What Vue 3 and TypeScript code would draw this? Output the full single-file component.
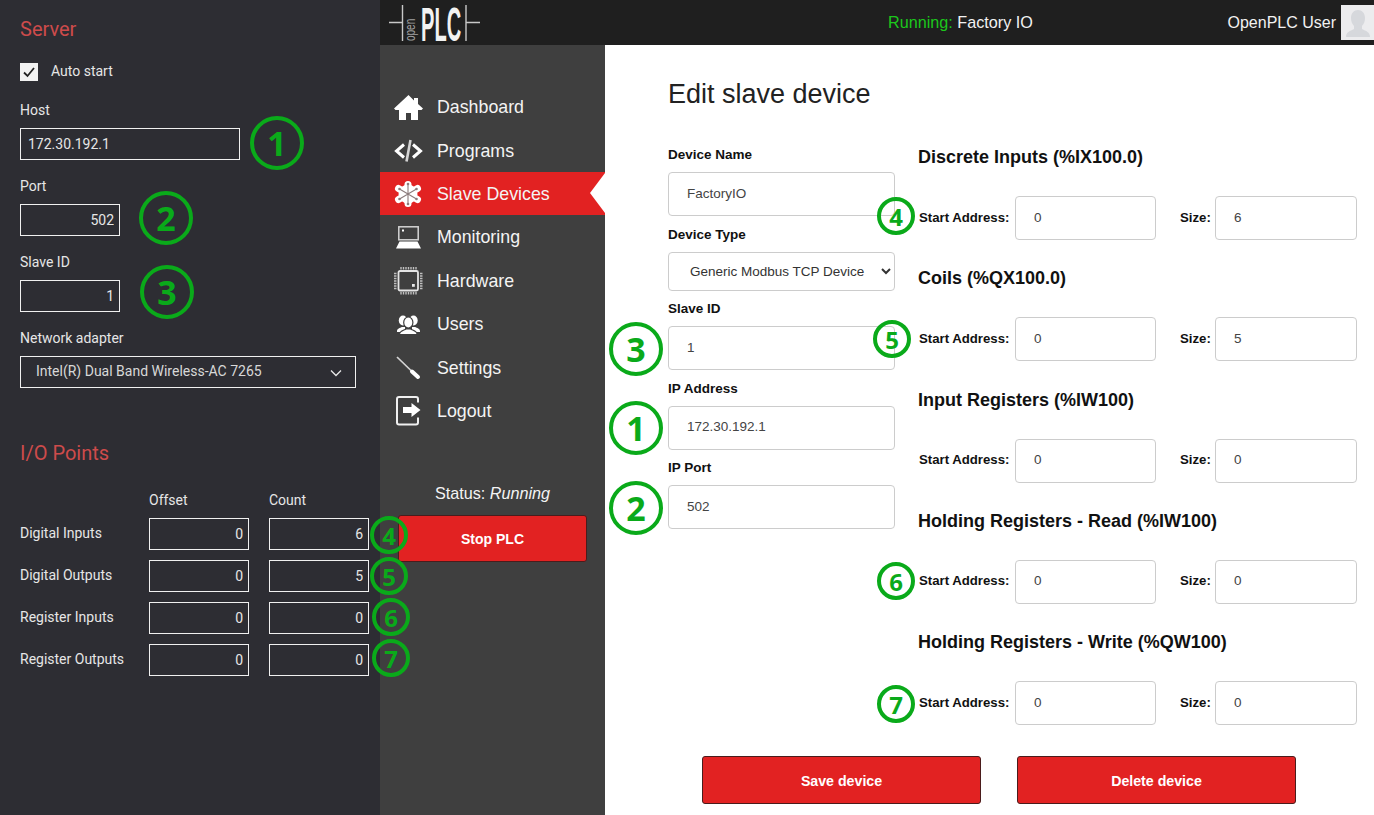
<script setup lang="ts">
// numbered green markers drawn over the screenshot
const badges = [
  { n: 1, x: 277, y: 143, big: true },
  { n: 2, x: 166, y: 218, big: true },
  { n: 3, x: 167, y: 292, big: true },
  { n: 4, x: 389, y: 535, big: false },
  { n: 5, x: 389, y: 576, big: false },
  { n: 6, x: 391, y: 617, big: false },
  { n: 7, x: 391, y: 658, big: false },
  { n: 3, x: 636, y: 349, big: true },
  { n: 1, x: 636, y: 428, big: true },
  { n: 2, x: 636, y: 508, big: true },
  { n: 4, x: 896, y: 216, big: false },
  { n: 5, x: 892, y: 339, big: false },
  { n: 6, x: 896, y: 581, big: false },
  { n: 7, x: 896, y: 704, big: false },
]

const ioRows = [
  { label: 'Digital Inputs', offset: 0, count: 6 },
  { label: 'Digital Outputs', offset: 0, count: 5 },
  { label: 'Register Inputs', offset: 0, count: 0 },
  { label: 'Register Outputs', offset: 0, count: 0 },
]

const navItems = [
  { id: 'home', label: 'Dashboard' },
  { id: 'code', label: 'Programs' },
  { id: 'slave', label: 'Slave Devices', active: true },
  { id: 'monitor', label: 'Monitoring' },
  { id: 'chip', label: 'Hardware' },
  { id: 'users', label: 'Users' },
  { id: 'tool', label: 'Settings' },
  { id: 'logout', label: 'Logout' },
]

const sections = [
  { title: 'Discrete Inputs (%IX100.0)', start: 0, size: 6 },
  { title: 'Coils (%QX100.0)', start: 0, size: 5 },
  { title: 'Input Registers (%IW100)', start: 0, size: 0 },
  { title: 'Holding Registers - Read (%IW100)', start: 0, size: 0 },
  { title: 'Holding Registers - Write (%QW100)', start: 0, size: 0 },
]
</script>

<template>
  <div class="page">
    <aside class="server">
      <h2 class="panel-title">Server</h2>
      <div class="auto-start">
        <span class="check">
          <svg width="18" height="18" viewBox="0 0 18 18"><path d="M4 9.500 7.500 13 14 5" fill="none" stroke="#222" stroke-width="1.800" /></svg>
        </span>
        <span class="auto-text">Auto start</span>
      </div>
      <label class="dark-label">Host</label>
      <input class="dark-input host" value="172.30.192.1" />
      <label class="dark-label">Port</label>
      <input class="dark-input short" value="502" />
      <label class="dark-label">Slave ID</label>
      <input class="dark-input short" value="1" />
      <label class="dark-label">Network adapter</label>
      <div class="adapter">
        <select>
          <option>Intel(R) Dual Band Wireless-AC 7265</option>
        </select>
        <svg class="chevron" width="12" height="8" viewBox="0 0 12 8"><path d="M1 1.500 6 6.500 11 1.500" fill="none" stroke="#e8e8e8" stroke-width="1.300" /></svg>
      </div>

      <h2 class="panel-title io-title">I/O Points</h2>
      <div class="io-grid">
        <span></span>
        <span class="io-head">Offset</span>
        <span class="io-head">Count</span>
        <template v-for="row in ioRows" :key="row.label">
          <span class="io-label">{{ row.label }}</span>
          <input class="dark-input" :value="row.offset" />
          <input class="dark-input" :value="row.count" />
        </template>
      </div>
    </aside>

    <div class="app">
      <header class="topbar">
        <svg class="logo" width="92" height="45" viewBox="0 0 92 45">
          <path d="M0 22.500H13.500M13.500 5V41M77 5V41M77 22.500H91" stroke="#c8c8c8" stroke-width="1.400" fill="none" />
          <text class="logo-open" transform="translate(26 41) rotate(-90) scale(1 1.500)">open</text>
          <text class="logo-plc" transform="translate(32 41) scale(.59 1.400)">PLC</text>
        </svg>
        <div class="running"><span class="green">Running:</span> Factory IO</div>
        <div class="user">OpenPLC User</div>
        <div class="avatar">
          <svg width="33" height="35" viewBox="0 0 33 35">
            <path d="M5 32c0-5 4-6 8-8v-3c-2-2-3-5-3-8 0-5 3-8 7-8s7 3 7 8c0 3-1 6-3 8v3c4 2 8 3 8 8z" fill="#d6d8dc" />
          </svg>
        </div>
      </header>

      <div class="body">
        <nav class="side">
          <ul class="menu">
            <li v-for="item in navItems" :key="item.label" class="menu-item" :class="{ active: item.active }">
              <svg class="icon" width="30" height="30" viewBox="0 0 30 30">
                <template v-if="item.id === 'home'">
                  <path d="M15.500 2 1 15.500 2.500 17H6V27H13V20H18V27H25V17H28.500L30 15.500 25 11V5H21V7.500Z" fill="#fff" />
                </template>
                <template v-else-if="item.id === 'code'">
                  <path d="M11 8.500 3.500 15 11 21.500M20 8.500 27.500 15 20 21.500" fill="none" stroke="#fff" stroke-width="3" />
                  <path d="M17.500 4 13.500 25.500" stroke="#d4d4d4" stroke-width="2.600" />
                </template>
                <template v-else-if="item.id === 'slave'">
                  <path d="M15 5.500V24.500M5.500 9.500 24.500 20.500M24.500 9.500 5.500 20.500" stroke="#fff" stroke-width="7" stroke-linecap="round" />
                  <circle cx="15" cy="15" r="9.500" fill="#fff" />
                  <path d="M15 5V25M6.500 10 23.500 20M23.500 10 6.500 20" stroke="#8c7c7c" stroke-width="1.100" />
                  <g fill="#8c7c7c">
                    <circle cx="15" cy="5" r="1.300" />
                    <circle cx="15" cy="25" r="1.300" />
                    <circle cx="6.500" cy="10" r="1.300" />
                    <circle cx="23.500" cy="10" r="1.300" />
                    <circle cx="6.500" cy="20" r="1.300" />
                    <circle cx="23.500" cy="20" r="1.300" />
                  </g>
                </template>
                <template v-else-if="item.id === 'monitor'">
                  <rect x="5.800" y="3.800" width="19.400" height="13" fill="none" stroke="#d4d4d4" stroke-width="1.500" />
                  <rect x="9" y="6.500" width="2" height="2" fill="#fff" />
                  <path d="M6.500 18.500H24.500L28 25.500H3Z" fill="#fff" />
                </template>
                <template v-else-if="item.id === 'chip'">
                  <rect x="5.500" y="5" width="19.500" height="19.500" rx="1.500" fill="none" stroke="#e4e4e4" stroke-width="1.800" />
                  <rect x="19" y="18" width="2.800" height="2.800" fill="#e8e8e8" />
                  <path d="M8 1V3.500M10.500 1V3.500M13 1V3.500M15.500 1V3.500M18 1V3.500M20.500 1V3.500M23 1V3.500M8 26V28.500M10.500 26V28.500M13 26V28.500M15.500 26V28.500M18 26V28.500M20.500 26V28.500M23 26V28.500M1 7.500H3.500M1 10H3.500M1 12.500H3.500M1 15H3.500M1 17.500H3.500M1 20H3.500M1 22.500H3.500M27 7.500H29.500M27 10H29.500M27 12.500H29.500M27 15H29.500M27 17.500H29.500M27 20H29.500M27 22.500H29.500" stroke="#c0c0c0" stroke-width="1.400" />
                </template>
                <template v-else-if="item.id === 'users'">
                  <ellipse cx="10" cy="10.500" rx="4.200" ry="5" fill="#fff" />
                  <ellipse cx="20.500" cy="10.500" rx="4.200" ry="5" fill="#fff" />
                  <path d="M4 21c0-2.500 3-3 5-4h3v5H4ZM27 21c0-2.500-3-3-5-4h-3v5h8Z" fill="#fff" />
                  <ellipse cx="15.300" cy="12.500" rx="4.600" ry="5.500" fill="#fff" stroke="#3f3f3f" stroke-width="1.200" />
                  <path d="M6.500 24.500c0-3.500 4-4 6.500-5.500h4.600c2.500 1.500 6.500 2 6.500 5.500Z" fill="#fff" stroke="#3f3f3f" stroke-width="1.200" />
                </template>
                <template v-else-if="item.id === 'tool'">
                  <path d="M4 4 18.500 18" stroke="#d4d4d4" stroke-width="1.700" />
                  <path d="M19 18.500 25 24" stroke="#fff" stroke-width="4" stroke-linecap="round" />
                </template>
                <template v-else-if="item.id === 'logout'">
                  <path d="M25 6.500V3a2 2 0 0 0-2-2H6a2 2 0 0 0-2 2V26.500a2 2 0 0 0 2 2H23a2 2 0 0 0 2-2V21.500" fill="none" stroke="#f0f0f0" stroke-width="2" />
                  <path d="M10 11H18.500V7L27.500 14 18.500 21V17H10Z" fill="#fff" />
                </template>
              </svg>
              <span>{{ item.label }}</span>
            </li>
          </ul>
          <div class="status">Status: <em>Running</em></div>
          <button class="stop red-btn">Stop PLC</button>
        </nav>

        <main class="main">
          <h1 class="title">Edit slave device</h1>
          <div class="form">
            <div class="col-left">
              <label class="field-label">Device Name</label>
              <input class="field" value="FactoryIO" />
              <label class="field-label">Device Type</label>
              <select class="field select">
                <option>Generic Modbus TCP Device</option>
              </select>
              <label class="field-label">Slave ID</label>
              <input class="field" value="1" />
              <label class="field-label">IP Address</label>
              <input class="field" value="172.30.192.1" />
              <label class="field-label">IP Port</label>
              <input class="field" value="502" />
            </div>
            <div class="col-right">
              <section v-for="s in sections" :key="s.title" class="section">
                <h3>{{ s.title }}</h3>
                <div class="addr-row">
                  <label>Start Address:</label>
                  <input class="field" :value="s.start" />
                  <label class="size-label">Size:</label>
                  <input class="field" :value="s.size" />
                </div>
              </section>
            </div>
          </div>
          <div class="actions">
            <button class="red-btn">Save device</button>
            <button class="red-btn">Delete device</button>
          </div>
        </main>
      </div>
    </div>

    <span
      v-for="(b, i) in badges"
      :key="i"
      class="badge"
      :class="{ big: b.big }"
      :style="{ left: b.x + 'px', top: b.y + 'px' }"
    >{{ b.n }}</span>
  </div>
</template>

<style scoped>
.page {
  position: relative;
  display: flex;
  width: 1374px;
  height: 815px;
  overflow: hidden;
  font-family: "Liberation Sans", Arial, sans-serif;
}

/* left settings panel */
.server {
  width: 380px;
  flex: none;
  box-sizing: border-box;
  padding: 17px 20px 0;
  background: #2d2d33;
  color: #e6e6e6;
  font-family: Roboto, "Liberation Sans", sans-serif;
  font-size: 14px;
}
.panel-title {
  margin: 0;
  font-size: 20px;
  line-height: 24px;
  font-weight: 400;
  color: #cd4b4b;
}
.auto-start {
  display: flex;
  align-items: center;
  gap: 13px;
  height: 18px;
  margin: 22px 0 21px;
}
.auto-text {
  padding-bottom: 2px;
}
.check {
  display: block;
  width: 18px;
  height: 18px;
  background: #f2f2f2;
}
.dark-label {
  display: block;
  height: 16px;
  line-height: 16px;
  margin-bottom: 10px;
}
.dark-input {
  display: block;
  box-sizing: border-box;
  height: 32px;
  width: 100%;
  margin-bottom: 18px;
  padding: 0 5px 0 7px;
  background: transparent;
  border: 1px solid #f0f0f0;
  border-radius: 0;
  color: #e6e6e6;
  font-family: inherit;
  font-size: 14px;
  text-align: right;
  outline: none;
}
.host {
  width: 220px;
  text-align: left;
}
.short {
  width: 100px;
}
.adapter {
  position: relative;
  width: 336px;
}
.adapter select {
  display: block;
  width: 100%;
  height: 32px;
  box-sizing: border-box;
  padding: 0 0 2px 15px;
  appearance: none;
  background: transparent;
  border: 1px solid #f0f0f0;
  border-radius: 0;
  color: #d8d8d8;
  font-family: inherit;
  font-size: 14px;
}
.chevron {
  position: absolute;
  right: 14px;
  top: 13px;
}
.io-title {
  margin-top: 53px;
}
.io-grid {
  display: grid;
  grid-template-columns: 109px 100px 100px;
  column-gap: 20px;
  row-gap: 10px;
  margin-top: 27px;
  align-items: center;
}
.io-grid .dark-input {
  margin: 0;
}
.io-head {
  line-height: 16px;
}
.io-label {
  padding-bottom: 2px;
}

/* app shell */
.app {
  flex: 1;
  display: flex;
  flex-direction: column;
  min-width: 0;
}
.topbar {
  flex: none;
  display: flex;
  align-items: center;
  height: 45px;
  padding-left: 9px;
  background: #1f1f1f;
  color: #f2f2f2;
  font-size: 16.200px;
}
.logo {
  flex: none;
  overflow: visible;
}
.logo-open {
  font-family: "Liberation Sans", sans-serif;
  font-size: 10px;
  fill: #a0a0a0;
}
.logo-plc {
  font-family: "Liberation Sans", sans-serif;
  font-size: 34px;
  font-weight: 700;
  fill: #f2f2f2;
}
.running {
  margin-left: 407px;
}
.green {
  color: #1cc71c;
}
.user {
  margin-left: auto;
  margin-right: 5px;
  font-size: 16px;
}
.avatar {
  width: 33px;
  height: 35px;
  background: #ececee;
}
.body {
  flex: 1;
  display: flex;
  min-height: 0;
}

/* sidebar */
.side {
  flex: none;
  width: 225px;
  box-sizing: border-box;
  padding-top: 40px;
  background: #3f3f3f;
  color: #f4f4f4;
}
.menu {
  margin: 0;
  padding: 0;
  list-style: none;
}
.menu-item {
  position: relative;
  display: flex;
  align-items: center;
  gap: 14px;
  box-sizing: border-box;
  height: 43.400px;
  padding: 2px 0 0 13px;
  font-size: 17.800px;
}
.menu-item.active {
  background: #e22222;
}
.menu-item.active::after {
  content: "";
  position: absolute;
  right: 0;
  top: 50%;
  margin-top: -20px;
  border: 20px solid transparent;
  border-left: 0;
  border-right: 15px solid #fff;
}
.icon {
  flex: none;
}
.status {
  margin-top: 51px;
  height: 20px;
  line-height: 20px;
  text-align: center;
  font-size: 16.200px;
}
.red-btn {
  display: block;
  padding: 2px 0 0;
  background: #e22222;
  border: 1px solid #4a1c1c;
  border-radius: 3px;
  color: #fff;
  font-family: inherit;
  font-size: 14.200px;
  font-weight: 700;
}
.stop {
  width: 189px;
  height: 47px;
  margin: 12px 0 0 18px;
  padding: 0;
  font-size: 14px;
}

/* main form */
.main {
  flex: 1;
  min-width: 0;
  box-sizing: border-box;
  padding: 33px 0 0 63px;
  background: #fff;
  color: #111;
}
.title {
  margin: 0;
  font-size: 27px;
  line-height: 32px;
  font-weight: 400;
  color: #222;
}
.form {
  display: grid;
  grid-template-columns: 227px 439px;
  column-gap: 23px;
  margin-top: 36px;
}
.field {
  display: block;
  box-sizing: border-box;
  width: 100%;
  height: 44px;
  padding: 0 0 2px 18px;
  background: #fff;
  border: 1px solid #ccc;
  border-radius: 4px;
  color: #444;
  font-family: inherit;
  font-size: 13.500px;
  outline: none;
}
.select {
  height: 39px;
  color: #333;
  padding: 0 0 0 17px;
}
.field-label {
  display: block;
  height: 16px;
  line-height: 17px;
  margin-bottom: 10px;
  font-size: 13.500px;
  font-weight: 700;
}
.col-left .field {
  margin-bottom: 9.500px;
}
.section {
  height: 93px;
  margin-bottom: 28.250px;
}
.section h3 {
  margin: 1px 0 29px;
  height: 20px;
  line-height: 20px;
  font-size: 18px;
  font-weight: 700;
  white-space: nowrap;
}
.addr-row {
  display: grid;
  grid-template-columns: 97px 141px 59px 142px;
  align-items: center;
  font-size: 13.200px;
  font-weight: 700;
}
.addr-row label {
  padding: 0 0 2px 1px;
  white-space: nowrap;
}
.addr-row .size-label {
  padding-left: 24px;
}
.actions {
  display: flex;
  gap: 36px;
  margin: 3px 0 0 34px;
}
.actions .red-btn {
  width: 279px;
  height: 48px;
}

/* numbered markers */
.badge {
  position: absolute;
  box-sizing: border-box;
  width: 38px;
  height: 38px;
  margin: -19px 0 0 -19px;
  display: flex;
  align-items: center;
  justify-content: center;
  border: 4px solid #0aaa1a;
  border-radius: 50%;
  color: #0aaa1a;
  font-family: "Open Sans", sans-serif;
  font-size: 24px;
  font-weight: 700;
}
.badge.big {
  width: 54px;
  height: 54px;
  margin: -27px 0 0 -27px;
  font-size: 34px;
}
</style>
